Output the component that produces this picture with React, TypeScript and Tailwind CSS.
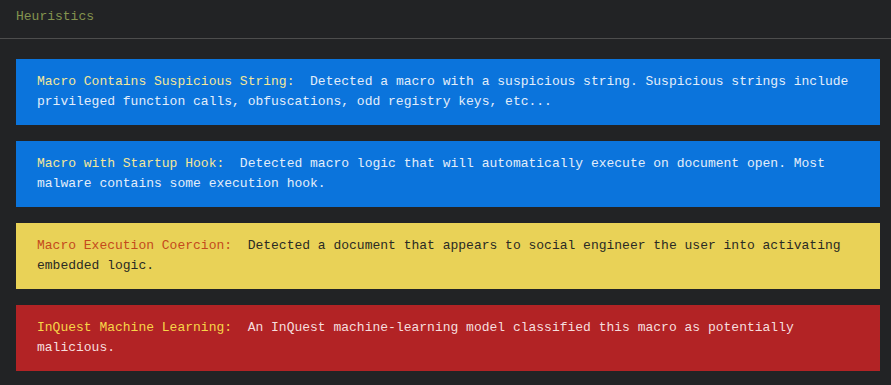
import { type FC } from 'react';

interface Heuristic {
  label: string;
  text: string;
  card: string;
  labelColor: string;
  textColor: string;
}

const HEURISTICS: Heuristic[] = [
  {
    label: 'Macro Contains Suspicious String:',
    text: 'Detected a macro with a suspicious string. Suspicious strings include privileged function calls, obfuscations, odd registry keys, etc...',
    card: 'bg-[#0b74dc]',
    labelColor: 'text-[#f3e79a]',
    textColor: 'text-[#e3eefa]',
  },
  {
    label: 'Macro with Startup Hook:',
    text: 'Detected macro logic that will automatically execute on document open. Most malware contains some execution hook.',
    card: 'bg-[#0b74dc]',
    labelColor: 'text-[#f3e79a]',
    textColor: 'text-[#e3eefa]',
  },
  {
    label: 'Macro Execution Coercion:',
    text: 'Detected a document that appears to social engineer the user into activating embedded logic.',
    card: 'bg-[#e9d257]',
    labelColor: 'text-[#c44a1c]',
    textColor: 'text-[#2a2a24]',
  },
  {
    label: 'InQuest Machine Learning:',
    text: 'An InQuest machine-learning model classified this macro as potentially malicious.',
    card: 'bg-[#b22325]',
    labelColor: 'text-[#f7d548]',
    textColor: 'text-[#f6dede]',
  },
];

const App: FC = () => {
  return (
    <div
      className="w-[891px] h-[385px] bg-[#222325] text-[13px] leading-5 overflow-hidden"
      style={{ fontFamily: '"Liberation Mono", "DejaVu Sans Mono", monospace' }}
    >
      {/* Header */}
      <div className="h-[39px] pt-[7px] pl-4 border-b border-[#4d4d4d] text-[#84944f]">Heuristics</div>

      {/* Cards */}
      <div className="flex flex-col gap-4 pt-5 pl-4 pr-[11px]">
        {HEURISTICS.map((h) => (
          <div key={h.label} className={`${h.card} h-[66px] px-[21px] py-[13px]`}>
            <span className={h.labelColor}>{h.label}</span>
            <span className={h.textColor}>{'\u00a0 '}{h.text}</span>
          </div>
        ))}
      </div>
    </div>
  );
};

export default App;
